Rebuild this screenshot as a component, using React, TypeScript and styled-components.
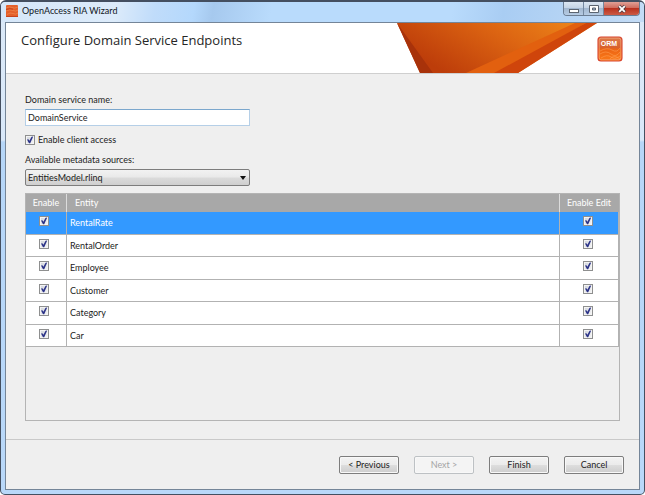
import React, { useState } from 'react';
import styled, { createGlobalStyle, css } from 'styled-components';

const GlobalStyle = createGlobalStyle`
  *, *::before, *::after { box-sizing: border-box; }
  body { margin: 0; background: #fff; }
  body, button, input, select { font-family: Lato, "Open Sans", sans-serif; font-size: 9px; color: #1c1c1c; }
`;

const WindowFrame = styled.div`
  display: flex;
  flex-direction: column;
  min-height: 100vh;
  padding: 0 4px 4px;
  border: 1px solid #444f60;
  border-top-width: 2px;
  border-radius: 6px 6px 5px 5px;
  background: linear-gradient(180deg, #dbe9f8 0, #d9e8f9 138px, #b6d6f8 140px, #b9d8f9 100%);
`;

const TitleBar = styled.header`
  display: flex;
  align-items: flex-start;
  height: 20px;
  margin: 0 -4px;
  padding: 0 4px 0 5px;
  border-radius: 4px 4px 0 0;
  background: linear-gradient(100deg, #d6e7f9 0, #dcebfa 18%, #c0dcfa 24%, #b4d8fc 30%, #a6c9ee 33%, #b9dbfc 42%, #b9dbfc 70%, #a9cdf3 78%, #c4dcf6 100%);
`;

const Caption = styled.div`
  display: flex;
  align-items: center;
  gap: 4px;
  flex: 1;
  height: 18px;
  font-size: 9px;
  line-height: 14px;
  color: #10151c;
`;

const WindowButtons = styled.div`
  display: flex;
  height: 14px;
  border: 1px solid #6b7d93;
  border-top: 0;
  border-radius: 0 0 4px 4px;
  overflow: hidden;
`;

const WindowButton = styled.button<{ $close?: boolean }>`
  display: flex;
  align-items: center;
  justify-content: center;
  width: ${p => (p.$close ? 35 : 20)}px;
  padding: 0;
  border: 0;
  border-right: ${p => (p.$close ? '0' : '1px solid #7488a0')};
  background: ${p => p.$close
    ? 'linear-gradient(#e0a096 0, #cf6c5d 45%, #b9321f 50%, #cc5a45 100%)'
    : 'linear-gradient(#dbe6f2 0, #c5d4e5 45%, #a3b8d0 50%, #b6cbe3 100%)'};
`;

const Client = styled.div`
  display: flex;
  flex-direction: column;
  flex: 1;
  border: 1px solid #748598;
  background: #efefef;
`;

const Banner = styled.div`
  display: flex;
  justify-content: space-between;
  height: 51px;
  padding-left: 15px;
  border-bottom: 1px solid #cfcfcf;
  background: #fff;
`;

const Heading = styled.h1`
  margin: 7px 0 0;
  font-family: "Open Sans", sans-serif;
  font-size: 13px;
  font-weight: 400;
  line-height: 20px;
  color: #262626;
`;

const BannerArt = styled.div`
  display: flex;
  padding-right: 16px;
`;

const OrmBadge = styled.svg`
  margin-top: 13px;
`;

const Content = styled.main`
  display: flex;
  flex-direction: column;
  flex: 1;
  align-items: flex-start;
  padding: 20px 19px 18px;
`;

const FieldLabel = styled.label`
  line-height: 12px;
`;

const fieldBox = css`
  width: 225px;
  height: 17px;
  font-size: 9px;
`;

const TextInput = styled.input`
  ${fieldBox}
  margin: 3px 0 8px;
  padding: 0 2px;
  border: 1px solid #b5cfe7;
  border-top-color: #7ba7cd;
  background: #fff;
  outline: 0;
`;

const CheckLabel = styled.label`
  display: flex;
  align-items: center;
  gap: 3px;
  margin-bottom: 8px;
  line-height: 12px;
`;

const CheckBox = styled.span`
  display: inline-grid;
  width: 10px;
  height: 10px;
  & > * { grid-area: 1 / 1; }
`;

const CheckInput = styled.input`
  appearance: none;
  width: 10px;
  height: 10px;
  margin: 0;
  border: 1px solid #8e8f8f;
  background: linear-gradient(135deg, #cfd3da, #f6f6f6);
  box-shadow: inset 0 0 0 1px #f4f4f4;
  &:not(:checked) + svg { visibility: hidden; }
`;

const CheckMark = styled.svg`
  pointer-events: none;
`;

const SelectWrap = styled.div`
  display: grid;
  align-items: center;
  margin: 3px 0 7px;
  & > * { grid-area: 1 / 1; }
`;

const Select = styled.select`
  ${fieldBox}
  appearance: none;
  padding: 0 16px 0 2px;
  border: 1px solid #7d7d7d;
  border-radius: 2px;
  background: linear-gradient(#f2f2f2 0, #e9e9e9 48%, #dbdbdb 52%, #cfcfcf 100%);
`;

const SelectArrow = styled.svg`
  justify-self: end;
  margin-right: 4px;
  pointer-events: none;
`;

const GridPanel = styled.div`
  align-self: stretch;
  flex: 1;
  border: 1px solid #b4b4b4;
`;

const EntityTable = styled.table`
  width: 100%;
  height: 153px;
  table-layout: fixed;
  border-collapse: separate;
  border-spacing: 0;
`;

const HeadCell = styled.th<{ $width?: number; $left?: boolean }>`
  width: ${p => (p.$width ? `${p.$width}px` : 'auto')};
  height: 18px;
  padding: ${p => (p.$left ? '0 8px' : '0')};
  border-right: 1px solid #dcdcdc;
  background: #a8a8a8;
  color: #fff;
  font-weight: 400;
  line-height: 12px;
  text-align: ${p => (p.$left ? 'left' : 'center')};
  &:last-child { border-right-color: #a8a8a8; }
`;

const Row = styled.tr<{ $selected: boolean }>`
  background: ${p => (p.$selected ? '#3399ff' : '#fff')};
  color: ${p => (p.$selected ? '#fff' : '#1c1c1c')};
`;

const Cell = styled.td<{ $check?: boolean }>`
  padding: ${p => (p.$check ? '0 2px 4px 0' : '1px 3px 0')};
  border-right: 1px solid #b2b2b2;
  border-bottom: 1px solid #b2b2b2;
  line-height: 12px;
  text-align: ${p => (p.$check ? 'center' : 'left')};
  &:first-child { padding-right: 4px; }
  & > span { vertical-align: middle; }
`;

const Footer = styled.footer`
  display: flex;
  justify-content: flex-end;
  gap: 15px;
  padding: 16px 15px 15px;
  border-top: 1px solid #c9c9c9;
`;

const PushButton = styled.button`
  width: 60px;
  height: 18px;
  padding: 0;
  border: 1px solid #7d7d7d;
  border-radius: 2px;
  background: linear-gradient(#f3f3f3 0, #ebebeb 48%, #dddddd 52%, #cdcdcd 100%);
  box-shadow: inset 0 0 0 1px #f8f8f8;
  line-height: 12px;
  &:disabled {
    border-color: #bdc1c4;
    background: #f4f4f4;
    color: #a4a4a4;
  }
`;

function Check({ checked, onChange, label }: { checked: boolean; onChange: () => void; label?: string }) {
  return (
    <CheckBox>
      <CheckInput type="checkbox" checked={checked} onChange={onChange} aria-label={label} />
      <CheckMark width="10" height="10" viewBox="0 0 10 10" aria-hidden="true">
        <path d="M2 4.6 L3.4 4.2 L4.4 5.8 L6.6 1.7 L8.2 1.5 L5.2 8.2 L4 8.2 Z" fill="#2b3287" />
      </CheckMark>
    </CheckBox>
  );
}

function AppIcon() {
  return (
    <svg width="12" height="12" viewBox="0 0 12 12" aria-hidden="true">
      <rect width="12" height="12" rx="1" fill="#e4602a" />
      <path d="M0 3 Q4 1 6 2.5 T12 2 M0 6 Q4 4 7 5.5 T12 5 M1 9.5 Q4 7 7 8.5 T12 8" stroke="#f08a50" strokeWidth="0.7" fill="none" />
      <path d="M0 11.5 H12 M0 4.5 Q4 3 7 4.2" stroke="#c9431b" fill="none" />
    </svg>
  );
}

function Ribbon() {
  return (
    <svg width="200" height="50" viewBox="0 0 200 50" aria-hidden="true">
      <defs>
        <linearGradient id="ribbonMain" x1="0" y1="0.4" x2="1" y2="0">
          <stop offset="0" stopColor="#bd3d0a" />
          <stop offset="0.5" stopColor="#dc6412" />
          <stop offset="1" stopColor="#f08a1a" />
        </linearGradient>
      </defs>
      <path d="M0 0 H200 L121 50 H23 Z" fill="url(#ribbonMain)" />
      <path d="M0 0 L36 50 H23 Z" fill="#a8320a" />
      <path d="M178 0 H189 L102 50 H69 Z" fill="#e2600f" />
      <path d="M189 0 H200 L121 50 H97 Z" fill="#cf450b" />
    </svg>
  );
}

function OrmIcon() {
  return (
    <OrmBadge width="26" height="26" viewBox="0 0 26 26" role="img" aria-label="ORM">
      <defs>
        <linearGradient id="ormFill" x1="0" y1="0" x2="0" y2="1">
          <stop offset="0" stopColor="#dc7c4c" />
          <stop offset="0.45" stopColor="#d9602b" />
          <stop offset="0.5" stopColor="#ec6414" />
          <stop offset="1" stopColor="#fb7a18" />
        </linearGradient>
      </defs>
      <rect x="1" y="1" width="24" height="24" rx="3" fill="url(#ormFill)" stroke="#d8442e" strokeWidth="1.1" />
      <rect x="2.2" y="2.2" width="21.6" height="21.6" rx="2" fill="none" stroke="#f5b08c" strokeWidth="0.6" />
      <path d="M3 15 Q10 11 15 14 T23 12 M3 18 Q9 14 14 18 T23 16 M4 22 Q10 18 14 21 T23 20 M13 23 Q17 18 23 23" fill="none" stroke="#ffa65c" strokeWidth="0.5" />
      <text x="12" y="10" textAnchor="middle" fontFamily="Liberation Sans, sans-serif" fontSize="7" fontWeight="700" fill="#fff">ORM</text>
    </OrmBadge>
  );
}

const entityNames = ['RentalRate', 'RentalOrder', 'Employee', 'Customer', 'Category', 'Car'];

export default function App() {
  const [name, setName] = useState('DomainService');
  const [clientAccess, setClientAccess] = useState(true);
  const [selected, setSelected] = useState(0);
  const [rows, setRows] = useState(entityNames.map(entity => ({ entity, enable: true, edit: true })));

  const toggle = (index: number, key: 'enable' | 'edit') =>
    setRows(rows.map((row, i) => (i === index ? { ...row, [key]: !row[key] } : row)));

  return (
    <>
      <GlobalStyle />
      <WindowFrame>
        <TitleBar>
          <Caption><AppIcon />OpenAccess RIA Wizard</Caption>
          <WindowButtons>
            <WindowButton aria-label="Minimize">
              <svg width="10" height="10" viewBox="0 0 10 10"><rect x="0.5" y="5.5" width="9" height="3" fill="#fff" stroke="#5b6470" /></svg>
            </WindowButton>
            <WindowButton aria-label="Maximize">
              <svg width="10" height="10" viewBox="0 0 10 10"><path d="M0.5 1.5 H9.5 V8.5 H0.5 Z M3.5 4 V6 H6.5 V4 Z" fill="#fff" fillRule="evenodd" stroke="#5b6470" /></svg>
            </WindowButton>
            <WindowButton $close aria-label="Close">
              <svg width="10" height="10" viewBox="0 0 10 10">
                <path d="M2 2 L8 8 M8 2 L2 8" stroke="#5a4348" strokeWidth="3.6" />
                <path d="M2.2 2.2 L7.8 7.8 M7.8 2.2 L2.2 7.8" stroke="#fff" strokeWidth="1.8" />
              </svg>
            </WindowButton>
          </WindowButtons>
        </TitleBar>
        <Client>
          <Banner>
            <Heading>Configure Domain Service Endpoints</Heading>
            <BannerArt><Ribbon /><OrmIcon /></BannerArt>
          </Banner>
          <Content>
            <FieldLabel htmlFor="service-name">Domain service name:</FieldLabel>
            <TextInput id="service-name" value={name} onChange={e => setName(e.target.value)} />
            <CheckLabel>
              <Check checked={clientAccess} onChange={() => setClientAccess(!clientAccess)} />
              Enable client access
            </CheckLabel>
            <FieldLabel htmlFor="metadata-source">Available metadata sources:</FieldLabel>
            <SelectWrap>
              <Select id="metadata-source"><option>EntitiesModel.rlinq</option></Select>
              <SelectArrow width="6" height="4" viewBox="0 0 6 4" aria-hidden="true"><path d="M0 0 H6 L3 4 Z" fill="#111" /></SelectArrow>
            </SelectWrap>
            <GridPanel>
              <EntityTable>
                <thead>
                  <tr>
                    <HeadCell $width={41}>Enable</HeadCell>
                    <HeadCell $left>Entity</HeadCell>
                    <HeadCell $width={59}>Enable Edit</HeadCell>
                  </tr>
                </thead>
                <tbody>
                  {rows.map((row, i) => (
                    <Row key={row.entity} $selected={i === selected} onClick={() => setSelected(i)}>
                      <Cell $check><Check checked={row.enable} onChange={() => toggle(i, 'enable')} label={`Enable ${row.entity}`} /></Cell>
                      <Cell>{row.entity}</Cell>
                      <Cell $check><Check checked={row.edit} onChange={() => toggle(i, 'edit')} label={`Enable edit of ${row.entity}`} /></Cell>
                    </Row>
                  ))}
                </tbody>
              </EntityTable>
            </GridPanel>
          </Content>
          <Footer>
            <PushButton>&lt; Previous</PushButton>
            <PushButton disabled>Next &gt;</PushButton>
            <PushButton>Finish</PushButton>
            <PushButton>Cancel</PushButton>
          </Footer>
        </Client>
      </WindowFrame>
    </>
  );
}
